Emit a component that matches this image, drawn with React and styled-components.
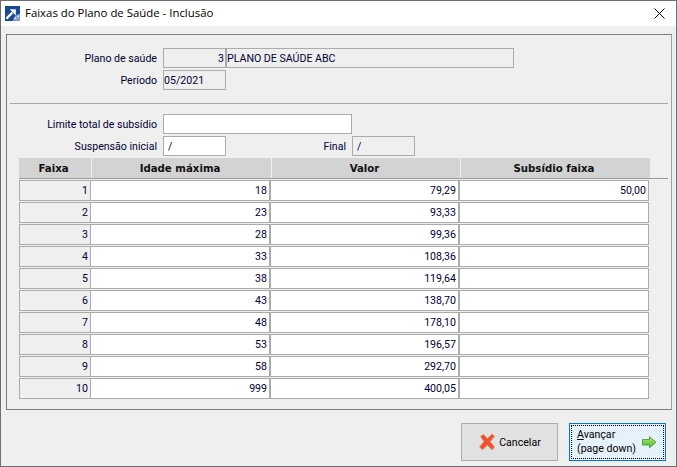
import React from "react";
import styled, { createGlobalStyle } from "styled-components";

const GlobalStyle = createGlobalStyle`
  html, body {
    margin: 0;
    padding: 0;
    background: #efefef;
  }
`;

const Window = styled.div`
  width: 677px;
  height: 467px;
  box-sizing: border-box;
  display: flex;
  flex-direction: column;
  background: #efefef;
  border: 1px solid #6e6e6e;
  font-family: Roboto, Tahoma, sans-serif;
  font-size: 10.6px;
  color: #000033;
  overflow: hidden;
`;

const TitleBar = styled.div`
  height: 25px;
  flex: none;
  background: #fff;
  display: flex;
  align-items: center;
  padding: 0 4px;
  gap: 5px;
`;

const Title = styled.span`
  flex: 1;
  font-family: "Open Sans", sans-serif;
  font-size: 11.4px;
  color: #000;
  padding-bottom: 2px;
`;

const CloseButton = styled.div`
  width: 20px;
  height: 20px;
  display: flex;
  align-items: center;
  justify-content: center;
  margin-right: 3px;
  padding-bottom: 1px;
  box-sizing: border-box;
`;

const Panel = styled.div`
  margin: 8px 4px 0 5px;
  height: 376px;
  box-sizing: border-box;
  border: 1px solid #7d7d7d;
  border-right-color: #a0a0a0;
  padding: 13px 3px 0 3px;
  display: flex;
  flex-direction: column;
`;

const FormRow = styled.div`
  display: flex;
  align-items: center;
  height: 20px;
  margin-top: ${(p) => p.$top || 0}px;
`;

const Label = styled.span`
  width: ${(p) => p.$width || 153}px;
  text-align: right;
  padding-right: 6px;
  box-sizing: border-box;
  flex: none;
`;

const Field = styled.div`
  width: ${(p) => p.$width}px;
  height: 20px;
  box-sizing: border-box;
  border: 1px solid #ababab;
  background: ${(p) => (p.$white ? "#fff" : "#efefef")};
  text-align: ${(p) => (p.$right ? "right" : "left")};
  line-height: 19px;
  padding: 0 1px 0 ${(p) => (p.$indent ? 4 : 0)}px;
  flex: none;
  white-space: nowrap;
`;

const Divider = styled.div`
  height: 1px;
  background: #a8a8a8;
  margin-top: 13px;
`;

const Table = styled.div`
  margin: 2px 0 0 9px;
  display: flex;
  flex-direction: column;
  gap: 1px;
`;

const HeaderRow = styled.div`
  display: grid;
  grid-template-columns: 72px 179px 188px 189px;
  gap: 1px;
  height: 21px;
  border-bottom: 1px solid #9a9a9a;
  box-sizing: border-box;
`;

const HeaderCell = styled.div`
  background: #d3d3d3;
  display: flex;
  align-items: center;
  justify-content: center;
  padding: 1px 3px 0 0;
  font-family: "DejaVu Sans", sans-serif;
  font-weight: 700;
  font-size: 10.2px;
  color: #111;
`;

const Rows = styled.div`
  display: flex;
  flex-direction: column;
  gap: 2px;
`;

const Row = styled.div`
  display: grid;
  grid-template-columns: 72px 180px 189px 189px;
  height: 20px;
  box-sizing: border-box;
`;

const Cell = styled.div`
  background: ${(p) => (p.$index ? "#efefef" : "#fff")};
  border: 1px solid #ababab;
  border-left-width: ${(p) => (p.$index ? 1 : 0)}px;
  border-right-width: ${(p) => (p.$last || p.$index ? 1 : 2)}px;
  box-sizing: border-box;
  text-align: right;
  line-height: 19px;
  padding-right: 2px;
  white-space: nowrap;
`;

const Footer = styled.div`
  flex: 1;
  display: flex;
  justify-content: flex-end;
  align-items: flex-start;
  gap: 11px;
  padding: 13px 10px 0 0;
`;

const Button = styled.div`
  height: 38px;
  width: 97px;
  box-sizing: border-box;
  display: flex;
  align-items: center;
  justify-content: ${(p) => (p.$focused ? "flex-start" : "center")};
  gap: ${(p) => (p.$focused ? 6 : 2)}px;
  padding-left: ${(p) => (p.$focused ? 7 : 0)}px;
  background: ${(p) => (p.$focused ? "#e5f1fb" : "#e1e1e1")};
  border: 1px solid ${(p) => (p.$focused ? "#0078d7" : "#adadad")};
  position: relative;
  color: #000;
`;

const FocusRing = styled.div`
  position: absolute;
  inset: 1px;
  border: 1px dotted #000;
`;

const ButtonText = styled.span`
  line-height: 14px;
`;

const Underlined = styled.span`
  text-decoration: underline;
`;

const rows = [
  [1, 18, "79,29", "50,00"],
  [2, 23, "93,33", ""],
  [3, 28, "99,36", ""],
  [4, 33, "108,36", ""],
  [5, 38, "119,64", ""],
  [6, 43, "138,70", ""],
  [7, 48, "178,10", ""],
  [8, 53, "196,57", ""],
  [9, 58, "292,70", ""],
  [10, 999, "400,05", ""],
];

const AppIcon = () => (
  <svg width="15" height="15" viewBox="0 0 16 16">
    <rect width="16" height="16" fill="#174a92" />
    <path d="M8 16 L11 10 L16 8 V16 Z" fill="#7f9ccb" />
    <path d="M10 12 h2 v2 h-2 z M13 10 h2 v2 h-2 z" fill="#d5deec" />
    <path d="M1.5 13.5 L8 7" stroke="#fff" strokeWidth="2.4" />
    <path d="M5 3.5 H11.5 V10 Z" fill="#fff" />
  </svg>
);

const CancelIcon = () => (
  <svg width="19" height="19" viewBox="0 0 19 19">
    <path
      d="M3 4.5 L6 2.5 L10 6.5 L14.5 2 L17 4 L12.5 9.5 L17 15 L14.5 17.5 L9.5 13 L5 17.5 L2 15 L6.5 9.5 Z"
      fill="#b8b0aa"
      opacity="0.7"
    />
    <path
      d="M2.5 3.5 L5.5 1.5 L9.5 5.5 L14 1 L16.5 3 L12 8.5 L16.5 14 L14 16.5 L9 12 L4.5 16.5 L1.5 14 L6 8.5 Z"
      fill="#f0502c"
      stroke="#e58a70"
      strokeWidth="0.6"
    />
  </svg>
);

const ArrowIcon = () => (
  <svg width="15" height="13" viewBox="0 0 15 13">
    <defs>
      <linearGradient id="arrowFill" x1="0" y1="0" x2="0" y2="1">
        <stop offset="0" stopColor="#a6ea6a" />
        <stop offset="1" stopColor="#4fbb28" />
      </linearGradient>
    </defs>
    <path
      d="M0.5 3.5 H7.5 V0.8 L14 6.2 L7.5 11.8 V9 H0.5 Z"
      fill="url(#arrowFill)"
      stroke="#4a8a30"
      strokeWidth="0.8"
    />
  </svg>
);

export default function App() {
  return (
    <>
      <GlobalStyle />
      <Window>
        <TitleBar>
          <AppIcon />
          <Title>Faixas do Plano de Saúde - Inclusão</Title>
          <CloseButton>
            <svg width="11" height="11" viewBox="0 0 11 11">
              <path d="M0.5 0.5 L10.5 10.5 M10.5 0.5 L0.5 10.5" stroke="#000" strokeWidth="1" />
            </svg>
          </CloseButton>
        </TitleBar>
        <Panel>
          <FormRow>
            <Label>Plano de saúde</Label>
            <Field $width={63} $right>3</Field>
            <Field $width={288}>PLANO DE SAÚDE ABC</Field>
          </FormRow>
          <FormRow $top={2}>
            <Label>Período</Label>
            <Field $width={63}>05/2021</Field>
          </FormRow>
          <Divider />
          <FormRow $top={10}>
            <Label>Limite total de subsídio</Label>
            <Field $width={189} $white />
          </FormRow>
          <FormRow $top={2}>
            <Label>Suspensão inicial</Label>
            <Field $width={63} $white $indent>/</Field>
            <Label $width={126}>Final</Label>
            <Field $width={63} $indent>/</Field>
          </FormRow>
          <Table>
            <HeaderRow>
              <HeaderCell>Faixa</HeaderCell>
              <HeaderCell>Idade máxima</HeaderCell>
              <HeaderCell>Valor</HeaderCell>
              <HeaderCell>Subsídio faixa</HeaderCell>
            </HeaderRow>
            <Rows>
              {rows.map(([faixa, idade, valor, subsidio]) => (
                <Row key={faixa}>
                  <Cell $index>{faixa}</Cell>
                  <Cell>{idade}</Cell>
                  <Cell>{valor}</Cell>
                  <Cell $last>{subsidio}</Cell>
                </Row>
              ))}
            </Rows>
          </Table>
        </Panel>
        <Footer>
          <Button>
            <CancelIcon />
            <span>Cancelar</span>
          </Button>
          <Button $focused>
            <FocusRing />
            <ButtonText>
              <Underlined>A</Underlined>vançar
              <br />
              (page down)
            </ButtonText>
            <ArrowIcon />
          </Button>
        </Footer>
      </Window>
    </>
  );
}
